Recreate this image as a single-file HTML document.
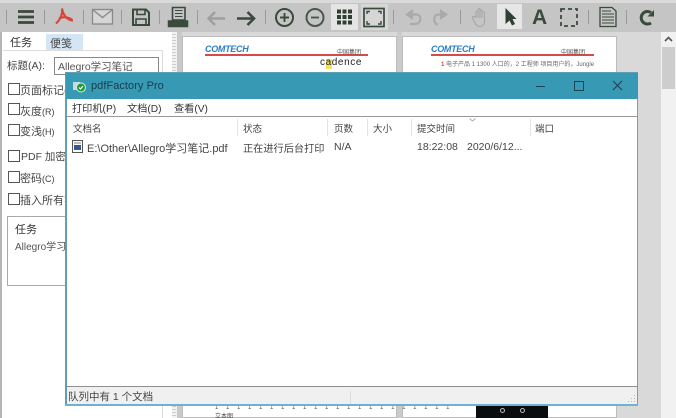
<!DOCTYPE html>
<html><head><meta charset="utf-8"><style>
html,body{margin:0;padding:0;width:676px;height:418px;overflow:hidden;background:#dcdcdc}
body{font-family:"Liberation Sans","Noto Sans CJK SC",sans-serif;font-size:10px;color:#444}
#w{position:absolute;left:0;top:0;width:676px;height:418px;overflow:hidden;filter:blur(.3px)}
#w div,#w span,#w svg{position:absolute;white-space:nowrap}
#w .cb{width:10px;height:10px;border:1px solid #555;background:#fff}
#w .sep{top:10px;width:1px;height:14px;background:#9a9a9a}
#w .h{top:121px;color:#444;font-size:9.500px}
#w .hs{top:119px;width:1px;height:17px;background:#e4e4e4}
#w .line{height:1px;background:#999}
</style></head><body><div id="w">
<div style="left:0;top:0;width:676px;height:32px;background:#c5c5c5"></div>
<div style="left:0;top:0;width:676px;height:3px;background:#dadada"></div>
<div style="left:0;top:32px;width:172px;height:386px;background:#fff"></div>
<div style="left:0;top:32px;width:2px;height:386px;background:#b5b5b5"></div>
<div style="left:172px;top:32px;width:5px;height:386px;background:#f2f2f2"></div>
<div style="left:177px;top:32px;width:484px;height:386px;background:#d9d9d9"></div>
<div style="left:177px;top:32px;width:5px;height:386px;background:#c9c9c9"></div>
<div style="left:397px;top:32px;width:5px;height:386px;background:#cbcbcb"></div>
<div style="left:661px;top:32px;width:15px;height:386px;background:#f1f1f1"></div>
<div style="left:662px;top:47px;width:13px;height:42px;background:#cdcdcd"></div>
<svg style="left:664px;top:36px" width="9" height="6"><path d="M1 5L4.500 1.500L8 5" fill="none" stroke="#555" stroke-width="1.600"/></svg>

<div class="sep" style="left:6px"></div><div class="sep" style="left:44px"></div><div class="sep" style="left:83px"></div><div class="sep" style="left:121px"></div><div class="sep" style="left:159px"></div><div class="sep" style="left:197px"></div><div class="sep" style="left:265px"></div><div class="sep" style="left:393px"></div><div class="sep" style="left:460px"></div><div class="sep" style="left:588px"></div><div class="sep" style="left:626px"></div>

<svg style="left:0;top:0" width="676" height="32" fill="none" stroke="#3a4a3c" stroke-width="2.200">
<path d="M18 11.500H34M18 17H34M18 22.500H34" stroke-width="2.800"/>
<path d="M56 23.500C60 20 63 14 62 8.500M62 8.500C63 15 67 20 73 20.500M59 18.500C63 16.500 68 17 72 19.500" stroke="#d9453a" stroke-width="2.200"/>
<rect x="92.500" y="9.500" width="20" height="14.500" fill="#d6d6d6" stroke="#858b86" stroke-width="1.300"/><path d="M93 10L102.500 17.500L112 10" stroke="#858b86" stroke-width="1.300"/>
<path d="M133 9.500H146L149 12.500V25H133Z" stroke-width="2"/><path d="M137 9.500V14.500H145V9.500M136 25V19H146V25" stroke-width="1.600"/>
<path d="M172.500 7.500H185V20H172.500Z" stroke-width="1.600"/><path d="M175 10.500H182.500M175 13.500H182.500M175 16.500H182.500" stroke-width="1"/><path d="M168.500 21H187.500V26.500H168.500Z" fill="#3a4a3c" stroke-width="1.500"/>
<path d="M225 18.500H208.500M215 12L208.500 18.500L215 25" stroke="#9ba09c" stroke-width="2.400"/>
<path d="M237 18.500H254M247.500 12L254 18.500L247.500 25" stroke-width="2.600"/>
<circle cx="284.500" cy="17.500" r="8.500" stroke-width="2"/><path d="M280 17.500H289M284.500 13V22" stroke-width="1.900"/>
<circle cx="315" cy="17.500" r="8.500" stroke-width="2" stroke="#4a584c"/><path d="M311 17.500H319" stroke-width="1.900" stroke="#4a584c"/>
</svg>
<div style="left:331px;top:4px;width:27px;height:26px;background:#e4e4e4"></div>
<div style="left:361px;top:4px;width:27px;height:26px;background:#d6d6d6"></div>
<div style="left:497px;top:4px;width:25px;height:25px;background:#e6e6e6"></div>
<svg style="left:0;top:0" width="676" height="32" fill="none" stroke="#3a4a3c" stroke-width="2">
<path d="M337 9.500H341V13.500H337ZM342.500 9.500H346.500V13.500H342.500ZM348 9.500H352V13.500H348ZM337 15H341V19H337ZM342.500 15H346.500V19H342.500ZM348 15H352V19H348ZM337 20.500H341V24.500H337ZM342.500 20.500H346.500V24.500H342.500ZM348 20.500H352V24.500H348Z" fill="#2f3f32" stroke="none"/>
<rect x="364" y="8.500" width="20" height="18" stroke-width="1.700"/><path d="M367 14V11.500H370M381 14V11.500H378M367 21V24H370M381 21V24H378" stroke-width="1.400"/>
<path d="M405 14.500L413 9V20Z" fill="#a8aba8" stroke="none"/><path d="M412 14.500H416C422 14.500 422 24 415 24H410" stroke="#a8aba8" stroke-width="2.200"/>
<path d="M448 14.500L440 9V20Z" fill="#a8aba8" stroke="none"/><path d="M441 14.500H438C433 14.500 433 24 438 24.500" stroke="#a8aba8" stroke-width="2.200"/>
<path d="M476 18V12.500C476 10.500 478 10.500 478 12.500V18V10C478 8 480 8 480 10V18V11C480 9 482 9 482 11V18V13C482 11 484.500 11 484.500 13V21C484.500 25 482 26.500 480 26.500C477 26.500 476 25 475 23L472.500 18C472 16 474.500 15.500 476 18" stroke="#a5a8a5" stroke-width="1.100"/>
<path d="M505.500 8L505.500 24L509.500 20.500L512 25.500L515 24L512.500 19H516.500Z" fill="#2f3f32" stroke="none"/>
<rect x="561" y="9" width="16" height="17" stroke-width="1.800" stroke-dasharray="4 3"/>
<path d="M600 7.500H612L616 11V26.500H600Z" stroke-width="1.300"/><path d="M602 11H611M602 14H614M602 17H614M602 20H614M602 23H614" stroke-width="1.100"/>
<path d="M651 12.500A6.300 6.300 0 1 0 651 23" stroke-width="3"/><path d="M654 10V16.500H647.500Z" fill="#3a4a3c" stroke="none"/>
</svg>
<span style="left:532px;top:6px;font:bold 21px 'Liberation Sans',sans-serif;color:#3a4a3c">A</span>

<div style="left:46px;top:34px;width:37px;height:16px;background:#d4e5f5"></div>
<span style="left:10px;top:34px;font-size:11px;color:#333">任务</span>
<span style="left:50px;top:35px;font-size:11px;color:#444">便笺</span>
<div style="left:3px;top:50px;width:160px;height:1px;background:#dcdcdc"></div>
<div style="left:162px;top:50px;width:1px;height:368px;background:#dcdcdc"></div>
<span style="left:7px;top:58px;font-size:10.500px">标题(A):</span>
<div style="left:54px;top:57px;width:103px;height:16px;border:1px solid #888;background:#fff"></div>
<span style="left:58px;top:59px;font-size:10.500px;color:#555">Allegro学习笔记</span>
<div class="cb" style="left:8px;top:83px"></div><span style="left:20px;top:82px;font-size:11px">页面标记(</span>
<div class="cb" style="left:8px;top:103px"></div><span style="left:20px;top:103px;font-size:11px">灰度<small style="font-size:9px">(R)</small></span>
<div class="cb" style="left:8px;top:124px"></div><span style="left:20px;top:123px;font-size:11px">变浅<small style="font-size:9px">(H)</small></span>
<div class="cb" style="left:8px;top:150px"></div><span style="left:21px;top:149px;font-size:10.500px">PDF 加密(</span>
<div class="cb" style="left:8px;top:171px"></div><span style="left:20px;top:170px;font-size:11px">密码<small style="font-size:9px">(C)</small></span>
<div class="cb" style="left:8px;top:193px"></div><span style="left:20px;top:192px;font-size:11px">插入所有字</span>
<div style="left:7px;top:216px;width:70px;height:68px;border:1px solid #aaa"></div>
<span style="left:15px;top:221px;font-size:11px;color:#333">任务</span>
<span style="left:15px;top:238px;font-size:10px;color:#555">Allegro学习</span>

<div style="left:182px;top:36px;width:215px;height:382px;background:#fff;border:1px solid #bdbdbd;box-sizing:border-box"></div>
<div style="left:402px;top:36px;width:215px;height:382px;background:#fff;border:1px solid #bdbdbd;box-sizing:border-box"></div>
<span style="left:205px;top:44px;font:italic bold 9px 'Liberation Sans',sans-serif;color:#2d7fc4;letter-spacing:-.3px">COMTECH</span>
<div style="left:205px;top:54px;width:163px;height:1.500px;background:#d84a4a"></div>
<span style="left:337px;top:47px;font-size:6px;color:#555">中国集团</span>
<div style="left:326px;top:59px;width:6px;height:10px;background:#f7e25a"></div>
<span style="left:320px;top:57px;font-size:10px;letter-spacing:.6px;color:#222">cadence</span>
<span style="left:431px;top:44px;font:italic bold 9px 'Liberation Sans',sans-serif;color:#2d7fc4;letter-spacing:-.3px">COMTECH</span>
<div style="left:431px;top:54px;width:163px;height:1.500px;background:#d84a4a"></div>
<span style="left:561px;top:47px;font-size:6px;color:#555">中国集团</span>
<span style="left:441px;top:59px;font-size:6px;color:#666"><b style="color:#d44">1</b> 电子产品 1 1300 人口的，2 工程师 项目用户的，Jungle</span>
<span style="left:215px;top:405px;font-size:6px;color:#555;letter-spacing:3px">1 1 1 1 1 1 1 1 1 1 1 1 1 1 1 1 1 1 1 1 1 1</span>
<span style="left:215px;top:411px;font-size:6px;color:#444">立本图</span>
<div style="left:476px;top:404px;width:72px;height:14px;background:#0a0d10"></div>
<div style="left:500px;top:408px;width:3px;height:3px;border:1px solid #bbb;border-radius:50%"></div>
<div style="left:520px;top:408px;width:3px;height:3px;border:1px solid #bbb;border-radius:50%"></div>
<div style="left:172px;top:32px;width:4px;height:386px;background:repeating-linear-gradient(#f2f2f2 0 2px,#cfcfcf 2px 3px)"></div>

<div style="left:65px;top:72px;width:573px;height:334px;background:#fff;border:1px solid #5f9fb8;box-sizing:border-box"></div>
<div style="left:66px;top:73px;width:572px;height:26px;background:#3799b4"></div>
<div style="left:66px;top:99px;width:1px;height:306px;background:#5f9fb8"></div>
<div style="left:637px;top:99px;width:1px;height:306px;background:#5fa8c4"></div>
<div style="left:65px;top:404px;width:573px;height:2px;background:#6fb2cf"></div>
<svg style="left:72px;top:79px" width="16" height="16"><rect x="1" y="3" width="7" height="8" fill="#c9d9dd"/><circle cx="9" cy="8.500" r="4.500" fill="#1b9e3e" stroke="#dcebd8"/><path d="M7 8.500L8.500 10L11 7" stroke="#fff" fill="none" stroke-width="1.200"/></svg>
<span style="left:91px;top:80px;font-size:11px;color:#173f4e;letter-spacing:.05px">pdfFactory Pro</span>
<div style="left:536px;top:86px;width:9px;height:1px;background:#1d4452"></div>
<div style="left:574px;top:81px;width:8px;height:8px;border:1px solid #1d4452"></div>
<svg style="left:612px;top:80px" width="11" height="11"><path d="M1 1L10 10M10 1L1 10" stroke="#1d4452" stroke-width="1.100"/></svg>
<span style="left:72px;top:99.500px;font-size:10.200px;color:#333">打印机(P)</span>
<span style="left:127px;top:99.500px;font-size:10.200px;color:#333">文档(D)</span>
<span style="left:174px;top:99.500px;font-size:10.200px;color:#333">查看(V)</span>
<div class="line" style="left:67px;top:116px;width:570px"></div>
<div class="h" style="left:73px">文档名</div><div class="h" style="left:243px">状态</div><div class="h" style="left:334px">页数</div><div class="h" style="left:373px">大小</div><div class="h" style="left:417px">提交时间</div><div class="h" style="left:535px">端口</div>
<div class="hs" style="left:237px"></div><div class="hs" style="left:327px"></div><div class="hs" style="left:367px"></div><div class="hs" style="left:411px"></div><div class="hs" style="left:530px"></div>
<svg style="left:469px;top:118px" width="7" height="4"><path d="M.5 .5L3.500 3L6.500 .5" stroke="#aaa" fill="none"/></svg>
<svg style="left:72px;top:140px" width="12" height="13"><rect x=".5" y=".5" width="10" height="12" fill="#fff" stroke="#555"/><rect x="2" y="5" width="7" height="5" fill="#335a8a"/><path d="M2 3H9" stroke="#777"/></svg>
<span style="left:87px;top:140px;font-size:11px;color:#444">E:\Other\Allegro学习笔记.pdf</span>
<span style="left:243px;top:140px;font-size:10.200px;color:#444">正在进行后台打印</span>
<span style="left:334px;top:141px;font-size:10.500px;color:#444">N/A</span>
<span style="left:417px;top:141px;font-size:10.500px;color:#444">18:22:08</span>
<span style="left:467px;top:141px;font-size:10.500px;color:#444">2020/6/12...</span>
<div class="line" style="left:67px;top:386px;width:570px;background:#8f8f8f"></div>
<div style="left:67px;top:387px;width:570px;height:17px;background:#f0f0f0"></div>
<div style="left:350px;top:391px;width:1px;height:13px;background:#ddd"></div>
<span style="left:68px;top:388.500px;font-size:10.500px;color:#444">队列中有 1 个文档</span>
<svg style="left:627px;top:394px" width="9" height="9"><path d="M7 1h1v1H7zM4 4h1v1H4zM7 4h1v1H7zM1 7h1v1H1zM4 7h1v1H4zM7 7h1v1H7z" fill="#b5b5b5"/></svg>
</div></body></html>
